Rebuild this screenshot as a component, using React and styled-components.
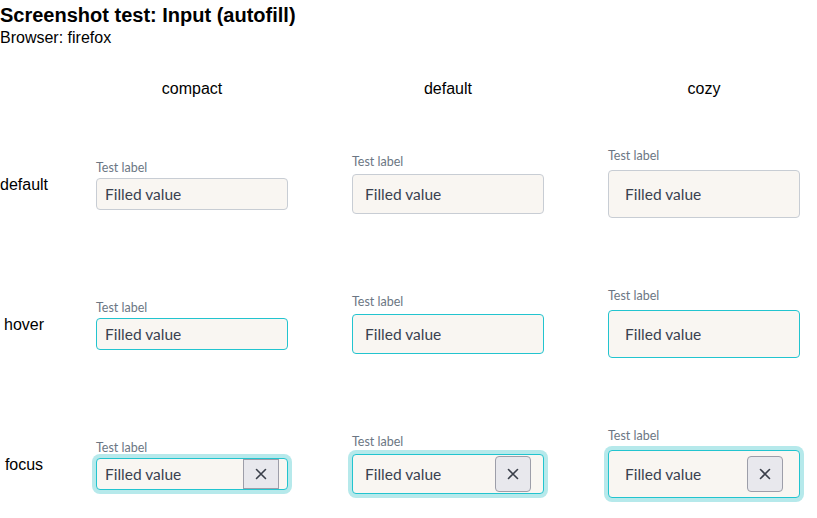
import React from "react";
import styled, { createGlobalStyle, css } from "styled-components";

const GlobalStyle = createGlobalStyle`
  html, body {
    margin: 0;
    overflow: hidden;
    background: #fff;
  }
  body {
    font-family: "Liberation Sans", Arial, sans-serif;
    color: #000;
  }
`;

const densities = {
  compact: { height: 32, pad: 8, gap: 2, foot: 0 },
  default: { height: 40, pad: 12, gap: 4, foot: 2 },
  cozy: { height: 48, pad: 16, gap: 6, foot: 4 },
};

const Page = styled.div`
  padding-top: 3px;
`;

const Title = styled.h1`
  margin: 0;
  font-size: 20px;
  line-height: 24px;
  font-weight: bold;
`;

const Subtitle = styled.div`
  margin-top: 2px;
  font-size: 16px;
  line-height: 18px;
`;

const Matrix = styled.div`
  margin-top: 15px;
  display: grid;
  grid-template-columns: 64px repeat(3, 256px);
  grid-template-rows: 53px repeat(3, 140px);
  align-items: center;
`;

const ColHead = styled.div`
  font-size: 16px;
  text-align: center;
`;

const RowHead = styled.div`
  width: 48px;
  font-size: 16px;
  text-align: center;
`;

const Cell = styled.div`
  display: flex;
  justify-content: center;
`;

const Field = styled.div`
  width: 192px;
  display: flex;
  flex-direction: column;
  gap: ${(p) => densities[p.$size].gap}px;
  padding-bottom: ${(p) => densities[p.$size].foot}px;
  font-family: Lato, "Open Sans", sans-serif;
`;

const Label = styled.label`
  font-size: 12.5px;
  line-height: 16px;
  color: #6b7683;
`;

const Box = styled.div`
  box-sizing: border-box;
  height: ${(p) => densities[p.$size].height}px;
  display: flex;
  align-items: center;
  padding: 0 ${(p) => densities[p.$size].pad}px;
  background: #f9f6f2;
  border: 1px solid #c8cdd4;
  border-radius: 4px;
  ${(p) =>
    (p.$state === "hover" || p.$state === "focus") &&
    css`
      border-color: #22c4cf;
    `}
  ${(p) =>
    p.$state === "focus" &&
    css`
      box-shadow: 0 0 0 4px #b6e9eb;
    `}
`;

const Value = styled.span`
  flex: 1;
  font-size: 15.5px;
  color: #3a4250;
  white-space: nowrap;
`;

const Clear = styled.button`
  box-sizing: border-box;
  flex: none;
  width: 36px;
  height: ${(p) => (p.$size === "compact" ? "100%" : "36px")};
  padding: 0;
  display: flex;
  align-items: center;
  justify-content: center;
  background: #e8e8ed;
  border: 1px solid #9d9ea9;
  border-radius: ${(p) => (p.$size === "compact" ? "0" : "4px")};
  color: #3a3f4a;
  cursor: pointer;
`;

const XIcon = () => (
  <svg width="12" height="12" viewBox="0 0 12 12" aria-hidden="true">
    <path
      d="M1.5 1.5 L10.5 10.5 M10.5 1.5 L1.5 10.5"
      stroke="currentColor"
      strokeWidth="1.6"
      strokeLinecap="round"
    />
  </svg>
);

const sizes = ["compact", "default", "cozy"];
const states = ["default", "hover", "focus"];

const Input = ({ size, state }) => (
  <Field $size={size}>
    <Label>Test label</Label>
    <Box $size={size} $state={state}>
      <Value>Filled value</Value>
      {state === "focus" && (
        <Clear $size={size} aria-label="Clear">
          <XIcon />
        </Clear>
      )}
    </Box>
  </Field>
);

export default function App() {
  return (
    <>
      <GlobalStyle />
      <Page>
        <Title>Screenshot test: Input (autofill)</Title>
        <Subtitle>Browser: firefox</Subtitle>
        <Matrix>
          <div />
          {sizes.map((s) => (
            <ColHead key={s}>{s}</ColHead>
          ))}
          {states.map((st) => (
            <React.Fragment key={st}>
              <RowHead>{st}</RowHead>
              {sizes.map((s) => (
                <Cell key={s}>
                  <Input size={s} state={st} />
                </Cell>
              ))}
            </React.Fragment>
          ))}
        </Matrix>
      </Page>
    </>
  );
}
